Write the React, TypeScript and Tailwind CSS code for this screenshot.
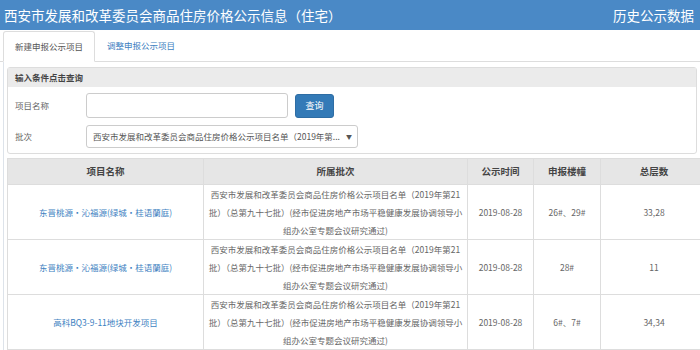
const BATCH =
  '西安市发展和改革委员会商品住房价格公示项目名单（2019年第21批）（总第九十七批）(经市促进房地产市场平稳健康发展协调领导小组办公室专题会议研究通过)'

const ROWS = [
  { name: '东晋桃源·沁福源(绿城·桂语蘭庭)', date: '2019-08-28', bldg: '26#、29#', floors: '33,28' },
  { name: '东晋桃源·沁福源(绿城·桂语蘭庭)', date: '2019-08-28', bldg: '28#', floors: '11' },
  { name: '高科BQ3-9-11地块开发项目', date: '2019-08-28', bldg: '6#、7#', floors: '34,34' },
]

export default function App() {
  return (
    <div className="w-[700px] h-[350px] overflow-hidden bg-white font-['Microsoft_YaHei','Noto_Sans_CJK_SC',sans-serif] text-[#666]">
      {/* Title bar */}
      <div className="h-[30px] bg-[#4a89c6] flex items-center justify-between pl-[4px] pr-[6px] text-white text-[13.5px]">
        <span>西安市发展和改革委员会商品住房价格公示信息（住宅）</span>
        <span>历史公示数据</span>
      </div>

      {/* Tabs */}
      <div className="flex items-end h-[32px] pl-[3px] border-b border-[#ddd]">
        <div className="h-[31px] w-[92px] -mb-px bg-white border border-[#ddd] border-b-white rounded-t-[3px] flex items-center justify-center text-[8.5px] text-[#555]">
          新建申报公示项目
        </div>
        <div className="h-[31px] px-[12px] flex items-center text-[8.5px] text-[#3d7fc1]">调整申报公示项目</div>
      </div>

      {/* Tab pane */}
      <div className="ml-[3px] border-l border-[#dde3ea] pl-[3px] pt-[5px]">
        {/* Search panel */}
        <div className="mr-[3px] border border-[#ddd] rounded-[3px] pb-[5px]">
          <div className="h-[19px] bg-[#ebebeb] flex items-center px-[7px] text-[8.5px] font-bold text-[#444]">
            输入条件点击查询
          </div>
          <div className="flex items-center h-[25px] mt-[6px] px-[7px] text-[8.5px]">
            <span className="w-[71px]">项目名称</span>
            <div className="w-[202px] h-[25px] border border-[#ccc] rounded-[3px]" />
            <button className="ml-[7px] w-[39px] h-[24px] bg-[#337ab7] border border-[#2e6da4] rounded-[3px] text-white text-[9px]">
              查询
            </button>
          </div>
          <div className="flex items-center h-[23px] mt-[7px] px-[7px] text-[8.5px]">
            <span className="w-[71px]">批次</span>
            <div className="w-[272px] h-[23px] border border-[#ccc] rounded-[3px] flex items-center justify-between pl-[6px] pr-[5px] text-[#555]">
              <span className="truncate">西安市发展和改革委员会商品住房价格公示项目名单（2019年第...</span>
              <span className="text-[6px] ml-[4px]">▼</span>
            </div>
          </div>
        </div>

        {/* Result table */}
        <table className="mt-[4px] border-collapse table-fixed w-[700px] text-[8.5px]">
          <colgroup>
            <col className="w-[196px]" />
            <col className="w-[264px]" />
            <col className="w-[66px]" />
            <col className="w-[67px]" />
            <col className="w-[107px]" />
          </colgroup>
          <thead>
            <tr className="h-[26px] bg-[#e6e6e6] text-[#444] text-[9.5px]">
              {['项目名称', '所属批次', '公示时间', '申报楼幢', '总层数'].map((h) => (
                <th key={h} className="border border-[#ddd] font-semibold">
                  {h}
                </th>
              ))}
            </tr>
          </thead>
          <tbody>
            {ROWS.map((r, i) => (
              <tr key={i} className="h-[54px] text-center">
                <td className="border border-[#ddd] text-[#3d7fc1]">{r.name}</td>
                <td className="border border-[#ddd] px-[2px] leading-[18px]">{BATCH}</td>
                <td className="border border-[#ddd]">{r.date}</td>
                <td className="border border-[#ddd]">{r.bldg}</td>
                <td className="border border-[#ddd]">{r.floors}</td>
              </tr>
            ))}
            <tr className="h-[54px]">
              <td className="border border-[#ddd]" />
              <td className="border border-[#ddd]" />
              <td className="border border-[#ddd]" />
              <td className="border border-[#ddd]" />
              <td className="border border-[#ddd]" />
            </tr>
          </tbody>
        </table>
      </div>
    </div>
  )
}
